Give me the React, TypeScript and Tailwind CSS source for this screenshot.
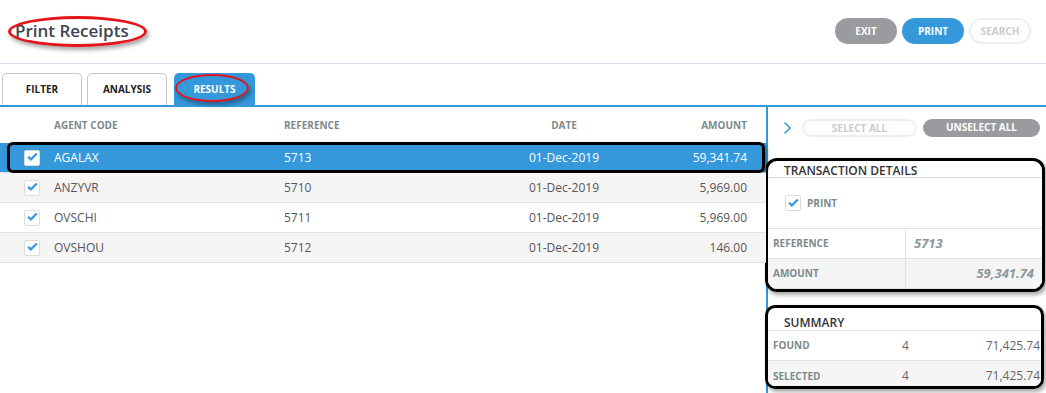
import React from "react";

const Check = () => (
  <div className="w-[16px] h-[16px] border border-[#dcdcdc] rounded-[2px] flex items-center justify-center bg-white">
    <svg width="11" height="9" viewBox="0 0 11 9">
      <path d="M0.8 4.6 L3.9 7.6 L10.2 1.2 L9.0 0.3 L3.9 5.3 L2.0 3.4 Z" fill="#3498db" stroke="#3498db" strokeWidth="0.9" strokeLinejoin="round" />
    </svg>
  </div>
);

const rows = [
  { code: "AGALAX", ref: "5713", date: "01-Dec-2019", amt: "59,341.74" },
  { code: "ANZYVR", ref: "5710", date: "01-Dec-2019", amt: "5,969.00" },
  { code: "OVSCHI", ref: "5711", date: "01-Dec-2019", amt: "5,969.00" },
  { code: "OVSHOU", ref: "5712", date: "01-Dec-2019", amt: "146.00" },
];

export default function App() {
  return (
    <div className="w-[1046px] h-[393px] bg-white relative overflow-hidden font-['Open_Sans',sans-serif] text-[#555]">
      {/* header */}
      <div className="h-[64px] flex items-start justify-between border-b border-[#dedbef]">
        <div className="relative ml-[15px] mt-[19px]">
          <h1 className="text-[17px] leading-[24px] font-semibold text-[#3d4353]">Print Receipts</h1>
          <div className="absolute left-[-7px] top-[-3px] w-[139px] h-[31px] rounded-[50%] border-[3px] border-[#e3151a] shadow-[2px_3px_4px_rgba(0,0,0,0.35)]" />
        </div>
        <div className="flex gap-[5px] mt-[18px] mr-[15px]">
          <button className="w-[62px] h-[26px] rounded-full bg-[#999b9e] text-white text-[10px] font-bold">EXIT</button>
          <button className="w-[62px] h-[26px] rounded-full bg-[#3498db] text-white text-[10px] font-bold">PRINT</button>
          <button className="w-[62px] h-[26px] rounded-full bg-white border-2 border-[#eceeef] text-[#c8cbcf] text-[10px] font-bold">SEARCH</button>
        </div>
      </div>

      {/* tabs */}
      <div className="flex items-end h-[43px] pl-[2px] border-b-2 border-[#3498db]">
        <div className="w-[80px] h-[32px] border border-b-0 border-[#c8c8c8] rounded-t-[5px] flex items-center justify-center text-[10px] font-bold text-[#222]">FILTER</div>
        <div className="w-[80px] h-[32px] ml-[5px] border border-b-0 border-[#c8c8c8] rounded-t-[5px] flex items-center justify-center text-[10px] font-bold text-[#222]">ANALYSIS</div>
        <div className="relative w-[81px] h-[32px] ml-[7px] bg-[#3498db] rounded-t-[5px] flex items-center justify-center text-[10px] font-bold text-white">
          RESULTS
          <div className="absolute left-[1px] top-[1px] w-[74px] h-[28px] rounded-[50%] border-[2px] border-[#e3151a] shadow-[2px_3px_4px_rgba(0,0,0,0.35)]" />
        </div>
      </div>

      {/* body */}
      <div className="flex h-[286px]">
        {/* table */}
        <div className="w-[766px]">
          <div className="flex items-center h-[36px] text-[10px] font-bold text-[#7d8a8b]">
            <div className="w-[54px]" />
            <div className="w-[230px]">AGENT CODE</div>
            <div className="w-[190px]">REFERENCE</div>
            <div className="w-[180px] text-center">DATE</div>
            <div className="w-[93px] text-right">AMOUNT</div>
          </div>
          {rows.map((r, i) => {
            const sel = i === 0;
            const bg = sel ? "bg-[#3498db] text-white" : i % 2 === 1 ? "bg-[#f5f5f5] text-[#555]" : "bg-white text-[#555]";
            return (
              <div key={r.code} className={`relative flex items-center h-[30px] border-b border-[#e2e2e2] text-[12px] ${bg}`}>
                <div className="w-[54px] pl-[24px]"><Check /></div>
                <div className="w-[230px]">{r.code}</div>
                <div className="w-[190px]">{r.ref}</div>
                <div className="w-[180px] text-center">{r.date}</div>
                <div className="w-[93px] text-right">{r.amt}</div>
                {sel && (
                  <div className="absolute left-[7px] top-[-1px] w-[758px] h-[31px] rounded-[6px] border-[3px] border-black shadow-[2px_3px_4px_rgba(0,0,0,0.35)]" />
                )}
              </div>
            );
          })}
        </div>
        <div className="w-[2px] bg-[#3498db]" />

        {/* right panel */}
        <div className="flex-1 pr-[1px]">
          <div className="flex items-center h-[40px] pt-[1px]">
            <svg className="ml-[15px]" width="9" height="14" viewBox="0 0 9 14">
              <path d="M1.5 1.5 L7 7 L1.5 12.5" fill="none" stroke="#3498db" strokeWidth="1.6" />
            </svg>
            <button className="ml-[10px] w-[115px] h-[18px] rounded-full border-2 border-[#eceeef] bg-white text-[#c8cbcf] text-[10px] font-bold">SELECT ALL</button>
            <button className="ml-[6px] w-[117px] h-[18px] rounded-full bg-[#999b9e] text-white text-[10px] font-bold">UNSELECT ALL</button>
          </div>

          <div className="mt-[11px] ml-[-3px] w-[280px] h-[134px] rounded-[12px] border-[3px] border-black overflow-hidden shadow-[2px_3px_4px_rgba(0,0,0,0.35)]">
            <div className="h-[17px] pl-[16px] text-[12px] leading-[19px] font-semibold text-[#333] border-b border-[#dedbef]">TRANSACTION DETAILS</div>
            <div className="h-[51px] flex items-center pl-[17px] border-b border-[#e2e2e2]">
              <Check />
              <span className="ml-[6px] text-[10px] font-bold text-[#7d8a8b]">PRINT</span>
            </div>
            <div className="flex h-[30px] border-b border-[#e2e2e2]">
              <div className="w-[138px] pl-[5px] flex items-center text-[10px] font-bold text-[#7d8a8b] border-r border-[#e2e2e2]">REFERENCE</div>
              <div className="flex-1 pl-[8px] flex items-center text-[13px] font-bold italic text-[#8b979a]">5713</div>
            </div>
            <div className="flex h-[30px] bg-[#f5f5f5] border-b border-[#e2e2e2]">
              <div className="w-[138px] pl-[5px] flex items-center text-[10px] font-bold text-[#7d8a8b] border-r border-[#e2e2e2]">AMOUNT</div>
              <div className="flex-1 pr-[8px] flex items-center justify-end text-[13px] font-bold italic text-[#8b979a]">59,341.74</div>
            </div>
          </div>

          <div className="mt-[13px] ml-[-3px] w-[279px] h-[84px] rounded-[10px] border-[3px] border-black overflow-hidden shadow-[2px_3px_4px_rgba(0,0,0,0.35)]">
            <div className="h-[23px] pl-[16px] pt-[6px] text-[12px] leading-[17px] font-semibold text-[#333] border-b border-[#e2e2e2]">SUMMARY</div>
            <div className="flex items-center h-[30px] border-b border-[#e2e2e2] text-[12px] text-[#666]">
              <div className="w-[134px] pl-[5px] text-[10px] font-bold text-[#7d8a8b]">FOUND</div>
              <div className="w-[20px]">4</div>
              <div className="flex-1 text-right pr-[1px]">71,425.74</div>
            </div>
            <div className="flex items-center h-[30px] bg-[#f5f5f5] text-[12px] text-[#666]">
              <div className="w-[134px] pl-[5px] text-[10px] font-bold text-[#7d8a8b]">SELECTED</div>
              <div className="w-[20px]">4</div>
              <div className="flex-1 text-right pr-[1px]">71,425.74</div>
            </div>
          </div>
        </div>
      </div>
    </div>
  );
}
